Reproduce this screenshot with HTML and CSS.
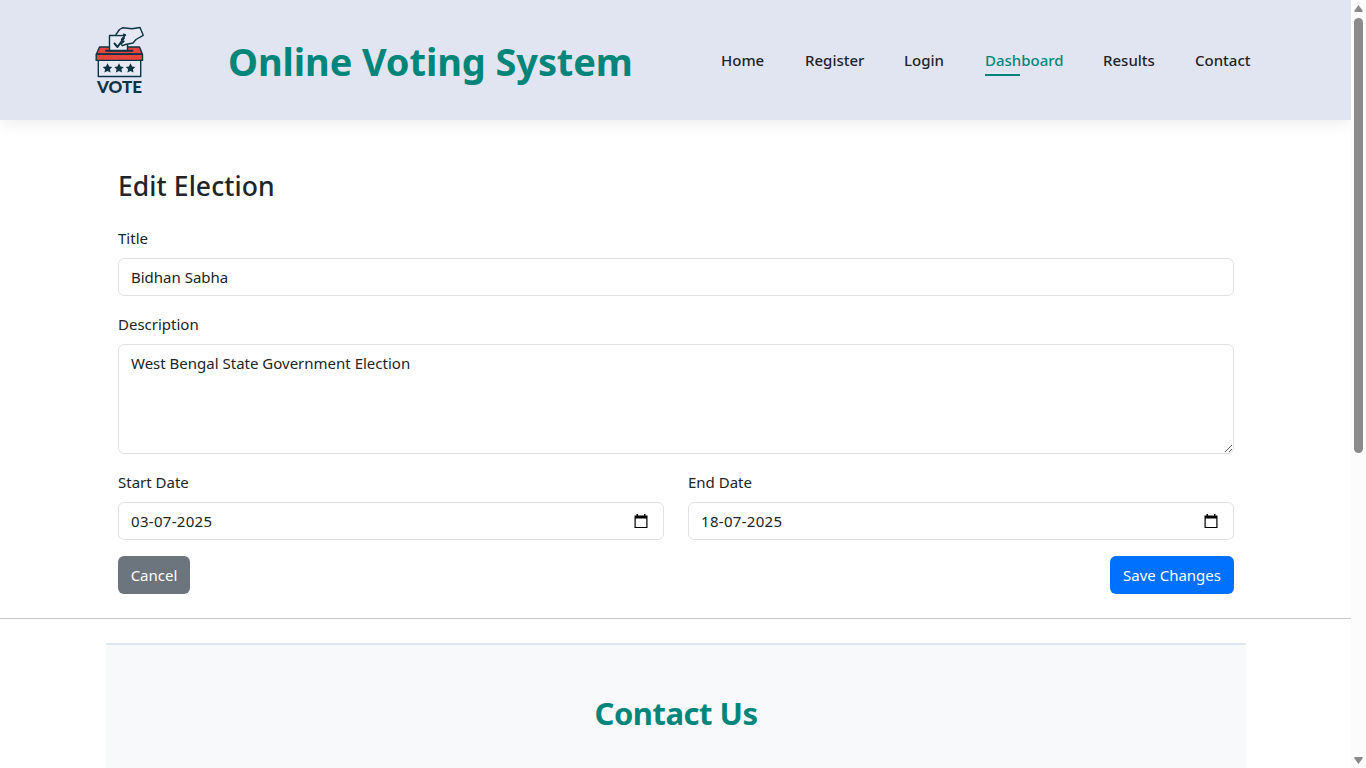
FILE: index.html
```html
<!DOCTYPE html>
<html lang="en">
<head>
<meta charset="utf-8">
<title>Online Voting System</title>
<link rel="stylesheet" href="styles.css">
</head>
<body>
<div class="viewport">
  <div class="page">
    <header class="header">
      <svg class="logo" viewBox="0 0 80 90" width="80" height="90" role="img" aria-label="Vote">
        <g stroke="#0d3444" stroke-width="1.400" stroke-linejoin="round" stroke-linecap="round">
          <path d="M18.300 45h42.400v16.500H18.300z" fill="#e6e9f3"/>
          <path d="M19.500 32h40l2.800 7H16.500z" fill="#e8433f"/>
          <path d="M16.200 39.200h46.300v6.200H16.200z" fill="#e8433f"/>
          <path d="M26 35.800h26.500" stroke-width="2"/>
          <path d="M29.500 35.500v-15h18v15z" fill="#e6e9f3"/>
          <path d="M36 19.500l3.500-5 3-1.700 9.500 1 8-1.300 3.200 7.800-7.200 4.200-3 3.500-7.500 1.500-3 1.200-1.500-1.700 3-2.800h-1.500l-1-2 4-4.200-3-.5z" fill="#e6e9f3" stroke="none"/>
          <path d="M36 19.500l3.500-5 3-1.700 9.500 1 8-1.300 3.200 7.800-7.200 4.200-3 3.500-7.500 1.500-3 1.200-1.500-1.700 3-2.800h-1.500l-1-2 4-4.200-2-.8" fill="none"/>
          <path d="M34.500 28.500l3 3.500 6.500-9" fill="none" stroke-width="2"/>
        </g>
        <g fill="#0d3444">
          <path id="star" d="M27.500 48.300l1.600 3.100 3.200.5-2.400 2.300.7 3.400-3.100-1.600-3.100 1.600.7-3.400-2.400-2.300 3.200-.5z"/>
          <use href="#star" x="11.500"/>
          <use href="#star" x="23"/>
        </g>
        <text class="logo-text" x="39.500" y="77.500" text-anchor="middle" textLength="45" lengthAdjust="spacingAndGlyphs">VOTE</text>
      </svg>
      <h1 class="brand">Online Voting System</h1>
      <nav class="nav">
        <a class="nav-link home">Home</a>
        <a class="nav-link register">Register</a>
        <a class="nav-link login">Login</a>
        <a class="nav-link dashboard active">Dashboard</a>
        <a class="nav-link results">Results</a>
        <a class="nav-link contact-link">Contact</a>
      </nav>
    </header>
    <main class="container">
      <h2 class="heading">Edit Election</h2>
      <form class="form">
        <div class="field">
          <label class="label">Title</label>
          <input class="control" type="text" value="Bidhan Sabha">
        </div>
        <div class="field">
          <label class="label">Description</label>
          <textarea class="control area">West Bengal State Government Election</textarea>
        </div>
        <div class="row">
          <div class="field">
            <label class="label">Start Date</label>
            <div class="control date"><span>03-07-2025</span>
              <svg class="calendar" viewBox="0 0 14 15" width="14" height="15"><path fill-rule="evenodd" d="M2.500 0h1.500v1.500h6V0h1.500v1.500H13.500V14H.5V1.500h2zM1.700 4.500V13h10.600V4.500z"/></svg>
            </div>
          </div>
          <div class="field">
            <label class="label">End Date</label>
            <div class="control date"><span>18-07-2025</span>
              <svg class="calendar" viewBox="0 0 14 15" width="14" height="15"><path fill-rule="evenodd" d="M2.500 0h1.500v1.500h6V0h1.500v1.500H13.500V14H.5V1.500h2zM1.700 4.500V13h10.600V4.500z"/></svg>
            </div>
          </div>
        </div>
        <div class="actions">
          <button class="btn cancel" type="button">Cancel</button>
          <button class="btn save" type="button">Save Changes</button>
        </div>
      </form>
    </main>
    <hr class="divider">
    <section class="contact">
      <h2 class="contact-title">Contact Us</h2>
    </section>
  </div>
  <div class="scrollbar">
    <svg width="15" height="768" viewBox="0 0 15 768">
      <path d="M7.500 5l4 5.500c.4.800 0 1.500-.8 1.500H4.300c-.8 0-1.200-.7-.8-1.500z" fill="#8b8b8b"/>
      <rect x="3" y="18" width="9" height="435" rx="4.500" fill="#8b8b8b"/>
      <path d="M7.500 764l4-5.500c.4-.8 0-1.500-.8-1.500H4.300c-.8 0-1.200.7-.8 1.500z" fill="#8b8b8b"/>
    </svg>
  </div>
</div>
</body>
</html>
```
FILE: styles.css
```css
* { box-sizing: border-box; }
body {
  margin: 0;
  overflow: hidden;
  font-family: "Noto Sans", "Open Sans", sans-serif;
  font-size: 15px;
  line-height: 24px;
  color: #212529;
  background: #fff;
}
.viewport { display: flex; height: 768px; overflow: hidden; }
.page { width: 1351px; height: 768px; overflow: hidden; }
.scrollbar { width: 15px; background: #fcfcfc; }
.scrollbar svg { display: block; }

.header {
  display: flex;
  align-items: center;
  height: 120px;
  padding-left: 80px;
  background: #e1e5f1;
  box-shadow: 0 0 18px rgba(0, 0, 0, 0.1);
}
.logo { flex: none; }
.logo-text { font: 900 16.5px Lato, sans-serif; fill: #0d3444; }
.brand {
  width: 493px;
  margin: 0 0 0 68px;
  padding-top: 2px;
  flex: none;
  font-size: 38px;
  font-weight: 700;
  line-height: 48px;
  letter-spacing: -0.1px;
  white-space: nowrap;
  color: #00857a;
}
.nav { display: flex; gap: 40px; }
.nav-link {
  position: relative;
  font-weight: 550;
  white-space: nowrap;
}
.home { width: 44px; }
.register { width: 59px; }
.login { width: 41px; }
.dashboard { width: 78px; }
.results { width: 52px; }
.contact-link { width: 57px; }
.active { color: #00857a; }
.active::after {
  content: "";
  position: absolute;
  left: 0;
  bottom: -4px;
  width: 35px;
  height: 2px;
  background: #00857a;
}

.container { width: 1116px; margin: 0 auto 24px 118px; padding-top: 49px; }
.heading {
  margin: 0 0 23px;
  font-size: 26.5px;
  font-weight: 500;
  line-height: 34px;
  letter-spacing: 0.08px;
}
.field { flex: 1; margin-bottom: 16px; }
.label { display: block; margin-bottom: 8px; }
.control {
  display: block;
  width: 100%;
  height: 38px;
  padding: 6px 12px;
  border: 1px solid #dee2e6;
  border-radius: 6px;
  font: inherit;
  color: inherit;
  background: #fff;
}
.area { height: 110px; resize: vertical; }
.row { display: flex; gap: 24px; }
.date {
  display: flex;
  align-items: center;
  justify-content: space-between;
  padding-right: 15px;
  letter-spacing: 0.3px;
}
.calendar { display: block; }
.actions { display: flex; justify-content: space-between; }
.btn {
  height: 38px;
  padding: 0;
  border: 0;
  border-radius: 6px;
  font: inherit;
  color: #fff;
}
.cancel { width: 72px; background: #6c757d; }
.save { width: 124px; background: #0070ff; }

.divider { height: 1px; margin: 0 0 24px; border: 0; background: #c8c9ca; }
.contact {
  width: 1140px;
  height: 200px;
  margin-left: 106px;
  padding-top: 49px;
  border-top: 2px solid #e1e5f1;
  background: #f8f9fb;
  text-align: center;
}
.contact-title {
  margin: 0;
  font-size: 31px;
  font-weight: 700;
  line-height: 38px;
  letter-spacing: -0.5px;
  color: #00857a;
}
```
